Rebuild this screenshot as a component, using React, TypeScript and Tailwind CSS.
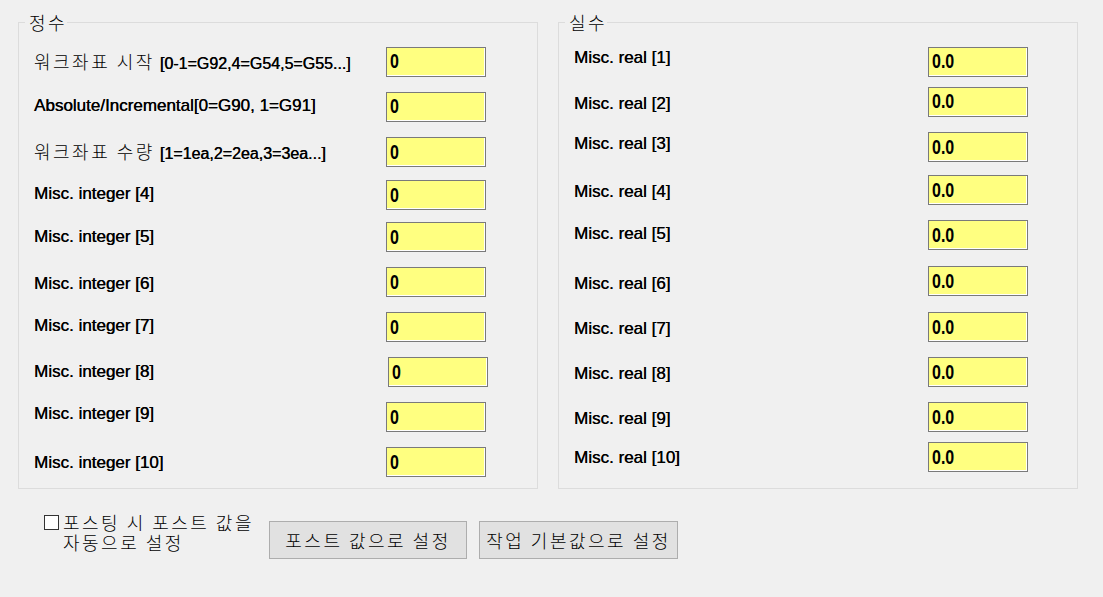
import React from 'react';

type Row = {
  ko?: string;
  label: string;
  value: string;
  mt: string;
  pad: string;
  inputMl?: string;
};

const intRows: Row[] = [
  { ko: '워크좌표 시작', label: '[0-1=G92,4=G54,5=G55...]', value: '0', mt: 'mt-[15px]', pad: '' },
  { label: 'Absolute/Incremental[0=G90, 1=G91]', value: '0', mt: 'mt-[15px]', pad: 'pb-[3px]' },
  { ko: '워크좌표 수량', label: '[1=1ea,2=2ea,3=3ea...]', value: '0', mt: 'mt-[15px]', pad: '' },
  { label: 'Misc. integer [4]', value: '0', mt: 'mt-[13px]', pad: 'pb-[3px]' },
  { label: 'Misc. integer [5]', value: '0', mt: 'mt-[12px]', pad: 'pb-[1px]' },
  { label: 'Misc. integer [6]', value: '0', mt: 'mt-[15px]', pad: 'pt-[3px]' },
  { label: 'Misc. integer [7]', value: '0', mt: 'mt-[15px]', pad: 'pb-[3px]' },
  { label: 'Misc. integer [8]', value: '0', mt: 'mt-[15px]', pad: 'pb-[1px]', inputMl: 'ml-[2px]' },
  { label: 'Misc. integer [9]', value: '0', mt: 'mt-[15px]', pad: 'pb-[7px]' },
  { label: 'Misc. integer [10]', value: '0', mt: 'mt-[15px]', pad: 'pt-[1px]' },
];

const realRows: Row[] = [
  { label: 'Misc. real [1]', value: '0.0', mt: 'mt-[15px]', pad: 'pb-[9px]' },
  { label: 'Misc. real [2]', value: '0.0', mt: 'mt-[10px]', pad: 'pt-[3px]' },
  { label: 'Misc. real [3]', value: '0.0', mt: 'mt-[15px]', pad: 'pb-[7px]' },
  { label: 'Misc. real [4]', value: '0.0', mt: 'mt-[13px]', pad: 'pt-[3px]' },
  { label: 'Misc. real [5]', value: '0.0', mt: 'mt-[15px]', pad: 'pb-[3px]' },
  { label: 'Misc. real [6]', value: '0.0', mt: 'mt-[16px]', pad: 'pt-[5px]' },
  { label: 'Misc. real [7]', value: '0.0', mt: 'mt-[16px]', pad: 'pt-[3px]' },
  { label: 'Misc. real [8]', value: '0.0', mt: 'mt-[15px]', pad: 'pt-[3px]' },
  { label: 'Misc. real [9]', value: '0.0', mt: 'mt-[15px]', pad: 'pt-[3px]' },
  { label: 'Misc. real [10]', value: '0.0', mt: 'mt-[10px]', pad: 'pt-[1px]' },
];

// Korean text: wide pitch like the Windows bitmap font
const ko = "font-['Noto_Sans_CJK_KR',sans-serif] text-[18px] tracking-[2.5px] font-light";
const bolden = '[text-shadow:0.35px_0_0_#000]';

function ParamRow({ row, labelWidth }: { row: Row; labelWidth: string }) {
  return (
    <div className={`flex items-center h-[30px] ${row.mt}`}>
      <div className={`${labelWidth} ${row.pad} whitespace-nowrap leading-[20px] text-black`}>
        {row.ko ? (
          <>
            <span className={`${ko} mr-[5px]`}>{row.ko}</span>
            <span className={`text-[16px] ${bolden}`}>{row.label}</span>
          </>
        ) : (
          <span className={`text-[17px] ${bolden}`}>{row.label}</span>
        )}
      </div>
      <div
        className={`${row.inputMl ?? ''} flex items-center w-[100px] h-[30px] bg-[#ffff80] border border-[#7a7a7a] shadow-[inset_-1px_-1px_0_#ffffff] pl-[3px]`}
      >
        <span className="inline-block scale-y-[1.3] text-[16px] font-bold leading-none text-black">
          {row.value}
        </span>
      </div>
    </div>
  );
}

function GroupBox({ title, rows, labelWidth }: { title: string; rows: Row[]; labelWidth: string }) {
  return (
    <fieldset className="w-[520px] h-[477px] border border-[#dcdcdc] px-[15px]">
      <legend className={`${ko} ml-[-9px] pl-[4px] pr-0 leading-[20px] text-black`}>{title}</legend>
      {rows.map((r, i) => (
        <ParamRow key={i} row={r} labelWidth={labelWidth} />
      ))}
    </fieldset>
  );
}

export default function App() {
  return (
    <div className="w-[1103px] h-[597px] bg-[#f0f0f0] font-['Liberation_Sans','Noto_Sans_CJK_KR',sans-serif] pl-[18px] pt-[12px] overflow-hidden">
      {/* Group boxes */}
      <div className="flex gap-[20px]">
        <GroupBox title="정수" rows={intRows} labelWidth="w-[352px]" />
        <GroupBox title="실수" rows={realRows} labelWidth="w-[354px]" />
      </div>

      {/* Bottom controls */}
      <div className="flex items-start">
        <label className={`${ko} flex items-start ml-[26px] mt-[23px] w-[225px] leading-[20px] text-black`}>
          <span className="mt-[3px] w-[15px] h-[15px] shrink-0 bg-white border border-[#333333]" />
          <span className="ml-[4px] whitespace-nowrap">
            포스팅 시 포스트 값을
            <br />
            자동으로 설정
          </span>
        </label>
        <button
          className={`${ko} mt-[32px] w-[198px] h-[38px] bg-[#e1e1e1] border border-[#adadad] text-black leading-[20px]`}
        >
          포스트 값으로 설정
        </button>
        <button
          className={`${ko} ml-[12px] mt-[32px] w-[199px] h-[38px] bg-[#e1e1e1] border border-[#adadad] text-black leading-[20px]`}
        >
          작업 기본값으로 설정
        </button>
      </div>
    </div>
  );
}
